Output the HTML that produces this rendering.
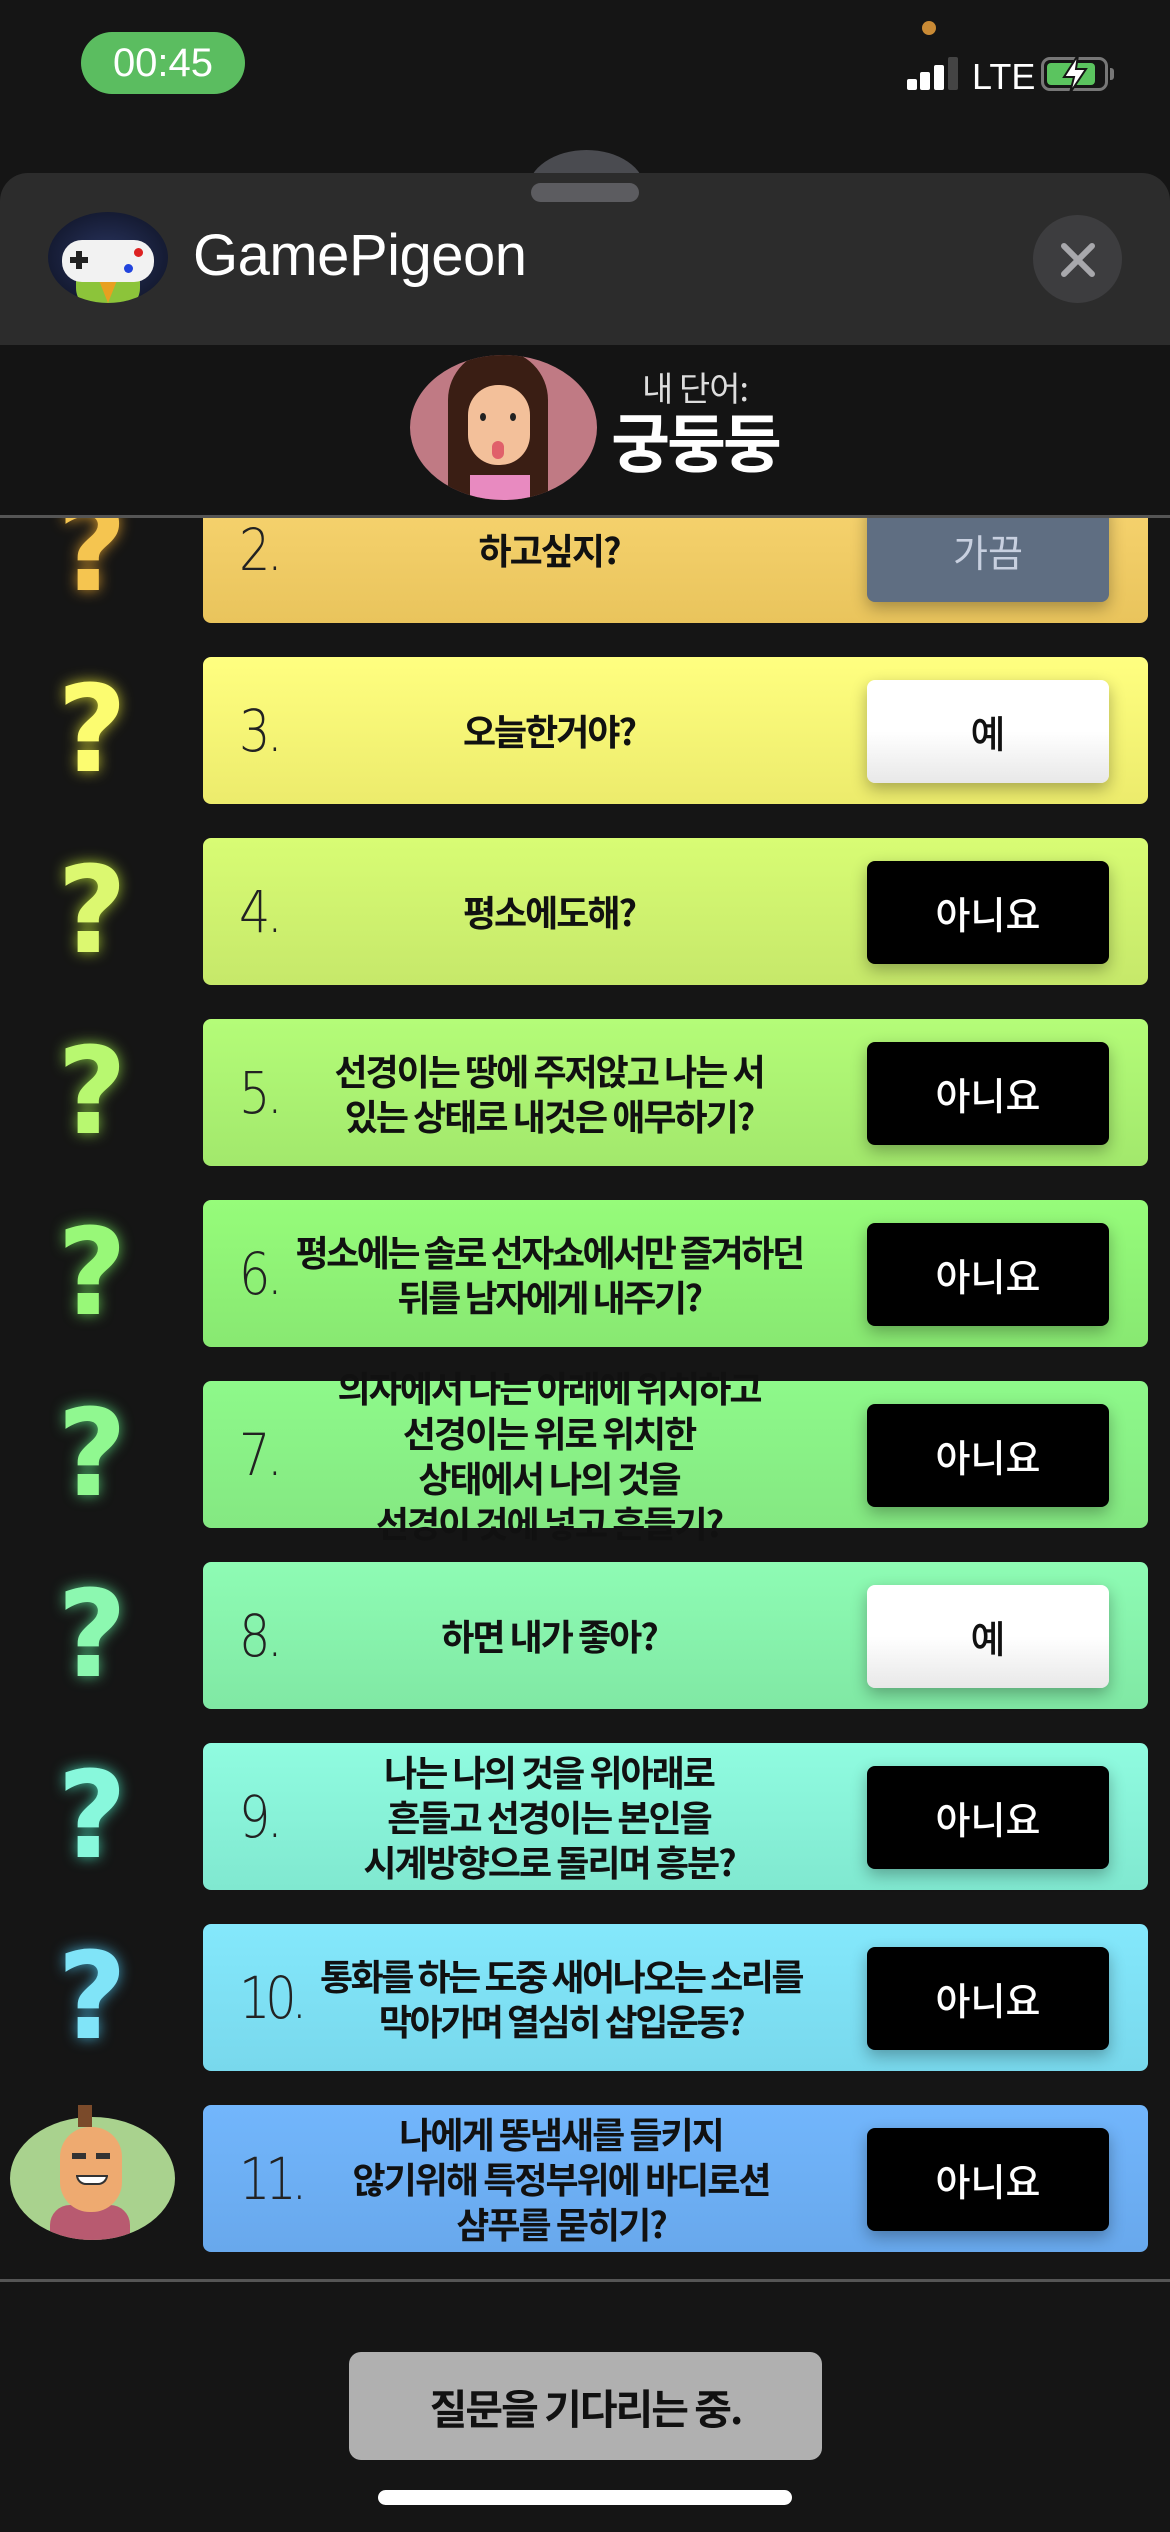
<!DOCTYPE html>
<html><head><meta charset="utf-8"><style>
*{margin:0;padding:0;box-sizing:border-box}
body{width:1170px;height:2532px;background:#151515;position:relative;overflow:hidden;font-family:"Liberation Sans","Noto Sans CJK KR",sans-serif}
.abs{position:absolute}
.card{position:absolute;left:203px;width:945px;height:147px;border-radius:8px;overflow:visible}
.num{position:absolute;left:36px;top:0;height:147px;display:flex;align-items:center;font-family:"DejaVu Sans","Liberation Sans",sans-serif;font-weight:200;font-size:58px;color:#222;letter-spacing:-4px;transform:scaleX(0.85);transform-origin:left center}
.q{position:absolute;left:80px;width:532px;top:0;height:147px;display:flex;align-items:center;justify-content:center;text-align:center;font-family:"Noto Sans CJK KR",sans-serif;font-weight:700;font-size:36px;line-height:45px;color:#111;letter-spacing:-2px;white-space:nowrap}
.btn{position:absolute;left:664px;top:23px;width:242px;height:103px;border-radius:8px;display:flex;align-items:center;justify-content:center;font-family:"Noto Sans CJK KR",sans-serif;font-size:38px;font-weight:500;box-shadow:0 6px 16px rgba(0,0,0,.3)}
.no{background:#000;color:#fff}
.yes{background:linear-gradient(#fff 50%,#e8e8e8);color:#111}
.qm{position:absolute;left:52px;width:80px;text-align:center;font-family:"DejaVu Sans","Liberation Sans",sans-serif;font-weight:700;font-size:120px;line-height:147px;height:147px}
</style></head><body>
<!-- status bar -->
<div class="abs" style="left:81px;top:32px;width:164px;height:62px;border-radius:31px;background:#5bbd60;color:#fff;font-size:40px;line-height:62px;text-align:center">00:45</div>
<div class="abs" style="left:922px;top:21px;width:14px;height:14px;border-radius:7px;background:#c98a35"></div>
<div class="abs" style="left:907px;top:79px;width:10px;height:11px;background:#fff;border-radius:2px"></div>
<div class="abs" style="left:920px;top:72px;width:10px;height:18px;background:#fff;border-radius:2px"></div>
<div class="abs" style="left:934px;top:65px;width:10px;height:25px;background:#fff;border-radius:2px"></div>
<div class="abs" style="left:948px;top:57px;width:10px;height:33px;background:#444;border-radius:2px"></div>
<div class="abs" style="left:972px;top:56px;color:#fff;font-size:36px">LTE</div>
<div class="abs" style="left:1041px;top:57px;width:67px;height:34px;border:3px solid #777;border-radius:9px"></div>
<div class="abs" style="left:1047px;top:63px;width:48px;height:22px;background:#5bc45f;border-radius:4px"></div>
<div class="abs" style="left:1110px;top:68px;width:4px;height:12px;background:#777;border-radius:0 3px 3px 0"></div>
<svg class="abs" style="left:1058px;top:53px" width="34" height="42" viewBox="0 0 34 42"><path d="M20 2 L6 24 H16 L12 40 L28 16 H18 Z" fill="#fff" stroke="#151515" stroke-width="2"/></svg>
<!-- sheet -->
<div class="abs" style="left:528px;top:150px;width:117px;height:80px;border-radius:50%;background:#4a4b50"></div>
<div class="abs" style="left:0;top:173px;width:1170px;height:172px;background:#2c2c2c;border-radius:28px 28px 0 0"></div>
<div class="abs" style="left:531px;top:183px;width:108px;height:19px;border-radius:10px;background:#5c5c60"></div>
<div class="abs" style="left:48px;top:212px;width:120px;height:91px;border-radius:50%;background:radial-gradient(#2a3560,#0c1020);overflow:hidden">
 <div class="abs" style="left:28px;top:40px;width:64px;height:60px;border-radius:40%;background:#8cc43a"></div>
 <div class="abs" style="left:50px;top:66px;width:20px;height:25px;background:#e8a020;clip-path:polygon(0 0,100% 0,50% 100%)"></div>
 <div class="abs" style="left:14px;top:28px;width:92px;height:42px;border-radius:20px;background:#f2f2f2"></div>
 <div class="abs" style="left:22px;top:45px;width:18px;height:6px;background:#222"></div>
 <div class="abs" style="left:28px;top:39px;width:6px;height:18px;background:#222"></div>
 <div class="abs" style="left:86px;top:36px;width:9px;height:9px;border-radius:50%;background:#d22"></div>
 <div class="abs" style="left:76px;top:52px;width:9px;height:9px;border-radius:50%;background:#24d"></div>
</div>
<div class="abs" style="left:193px;top:222px;color:#fff;font-size:58px;letter-spacing:-0.5px">GamePigeon</div>
<div class="abs" style="left:1033px;top:215px;width:89px;height:88px;border-radius:50%;background:#3d3d3f"></div>
<svg class="abs" style="left:1058px;top:240px" width="40" height="40" viewBox="0 0 40 40"><path d="M6 6 L34 34 M34 6 L6 34" stroke="#a8a8ac" stroke-width="6" stroke-linecap="round"/></svg>
<!-- word area -->
<div class="abs" style="left:0;top:345px;width:1170px;height:171px;background:#141414"></div>
<div class="abs" style="left:410px;top:355px;width:187px;height:145px;border-radius:50%;background:#c07a84;overflow:hidden">
 <div class="abs" style="left:38px;top:-5px;width:100px;height:160px;border-radius:50px 50px 10px 10px;background:#3a1e14"></div>
 <div class="abs" style="left:58px;top:30px;width:62px;height:80px;border-radius:30px 30px 30px 30px;background:#f3c09a"></div>
 <div class="abs" style="left:70px;top:58px;width:6px;height:8px;border-radius:50%;background:#222"></div>
 <div class="abs" style="left:100px;top:58px;width:6px;height:8px;border-radius:50%;background:#222"></div>
 <div class="abs" style="left:82px;top:86px;width:12px;height:18px;border-radius:6px;background:#e0606a"></div>
 <div class="abs" style="left:60px;top:120px;width:60px;height:40px;background:#e88ac0"></div>
</div>
<div class="abs" style="left:625px;top:365px;color:#ddd;font-family:'Noto Sans CJK KR',sans-serif;font-size:34px;line-height:44px;width:140px;text-align:center;letter-spacing:-1px">내 단어:</div>
<div class="abs" style="left:605px;top:400px;color:#fff;font-family:'Noto Sans CJK KR',sans-serif;font-weight:700;font-size:64px;line-height:80px;width:180px;text-align:center;letter-spacing:-3px">궁둥둥</div>
<!-- list -->
<div class="abs" style="left:0;top:518px;width:1170px;height:1761px;overflow:hidden">
<div style="position:absolute;left:0;top:-518px;width:1170px;height:2532px">
<div class="qm" style="top:476px;color:#f5c550;text-shadow:0 0 14px #c9902a">?</div>
<div class="card" style="top:476px;background:linear-gradient(#f9d672,#e9c45c)"><div class="num">2.</div><div class="q">하고싶지?</div><div class="btn" style="background:#5f6e82;color:#c8d0e0;font-weight:400">가끔</div></div>

<div class="qm" style="top:657px;color:#fcfc70;text-shadow:0 0 14px #bdbd30">?</div>
<div class="card" style="top:657px;background:linear-gradient(#ffff80,#eceb6c)"><div class="num">3.</div><div class="q">오늘한거야?</div><div class="btn yes">예</div></div>

<div class="qm" style="top:838px;color:#dcf870;text-shadow:0 0 14px #a0c030">?</div>
<div class="card" style="top:838px;background:linear-gradient(#d8fc74,#c6e86a)"><div class="num">4.</div><div class="q">평소에도해?</div><div class="btn no">아니요</div></div>

<div class="qm" style="top:1019px;color:#b8f870;text-shadow:0 0 14px #80c040">?</div>
<div class="card" style="top:1019px;background:linear-gradient(#b4fc78,#a2e86c)"><div class="num">5.</div><div class="q">선경이는 땅에 주저앉고 나는 서<br>있는 상태로 내것은 애무하기?</div><div class="btn no">아니요</div></div>

<div class="qm" style="top:1200px;color:#98f878;text-shadow:0 0 14px #60c050">?</div>
<div class="card" style="top:1200px;background:linear-gradient(#96fc7a,#88e872)"><div class="num">6.</div><div class="q" style="letter-spacing:-2.5px">평소에는 솔로 선자쇼에서만 즐겨하던<br>뒤를 남자에게 내주기?</div><div class="btn no">아니요</div></div>

<div class="qm" style="top:1381px;color:#90f890;text-shadow:0 0 14px #50c070">?</div>
<div class="card" style="top:1381px;background:linear-gradient(#8ef98a,#84e882)"><div class="num">7.</div><div class="q">의자에서 나는 아래에 위치하고<br>선경이는 위로 위치한<br>상태에서 나의 것을<br>선경이 것에 넣고 흔들기?</div><div class="btn no">아니요</div></div>

<div class="qm" style="top:1562px;color:#8cf8b0;text-shadow:0 0 14px #50c080">?</div>
<div class="card" style="top:1562px;background:linear-gradient(#8efcb4,#80e8a4)"><div class="num">8.</div><div class="q">하면 내가 좋아?</div><div class="btn yes">예</div></div>

<div class="qm" style="top:1743px;color:#88f8dc;text-shadow:0 0 14px #40c0a0">?</div>
<div class="card" style="top:1743px;background:linear-gradient(#90fce0,#80e8d0)"><div class="num">9.</div><div class="q">나는 나의 것을 위아래로<br>흔들고 선경이는 본인을<br>시계방향으로 돌리며 흥분?</div><div class="btn no">아니요</div></div>

<div class="qm" style="top:1924px;color:#80e4f8;text-shadow:0 0 14px #40a0c0">?</div>
<div class="card" style="top:1924px;background:linear-gradient(#84e8fc,#78d8ec)"><div class="num" style="letter-spacing:-6px">10.</div><div class="q" style="left:92px;letter-spacing:-2.5px">통화를 하는 도중 새어나오는 소리를<br>막아가며 열심히 삽입운동?</div><div class="btn no">아니요</div></div>

<div class="abs" style="left:10px;top:2117px;width:165px;height:123px;border-radius:50%;background:#a9d28e;overflow:hidden">
 <div class="abs" style="left:40px;top:88px;width:80px;height:50px;border-radius:20px 20px 0 0;background:#b85a70"></div>
 <div class="abs" style="left:50px;top:10px;width:62px;height:85px;border-radius:30px;background:#eeaa70"></div>
 <div class="abs" style="left:62px;top:36px;width:14px;height:6px;background:#333"></div>
 <div class="abs" style="left:86px;top:36px;width:14px;height:6px;background:#333"></div>
 <div class="abs" style="left:66px;top:58px;width:32px;height:10px;border-radius:0 0 10px 10px;background:#fff;border:2px solid #333"></div>
</div>
<div class="abs" style="left:78px;top:2105px;width:14px;height:22px;background:#7a4a2a"></div>
<div class="card" style="top:2105px;background:linear-gradient(#72b6fc,#68a8ec)"><div class="num" style="letter-spacing:-6px">11.</div><div class="q" style="left:92px">나에게 똥냄새를 들키지<br>않기위해 특정부위에 바디로션<br>샴푸를 묻히기?</div><div class="btn no">아니요</div></div>
</div></div>
<!-- separators -->
<div class="abs" style="left:0;top:515px;width:1170px;height:3px;background:#555"></div>
<div class="abs" style="left:0;top:2279px;width:1170px;height:3px;background:#555"></div>
<!-- bottom -->
<div class="abs" style="left:349px;top:2352px;width:473px;height:108px;border-radius:12px;background:#b0b0b0;display:flex;align-items:center;justify-content:center;font-family:'Noto Sans CJK KR',sans-serif;font-weight:700;font-size:41px;color:#111;letter-spacing:-2px">질문을 기다리는 중.</div>
<div class="abs" style="left:378px;top:2490px;width:414px;height:15px;border-radius:8px;background:#fff"></div>
</body></html>
